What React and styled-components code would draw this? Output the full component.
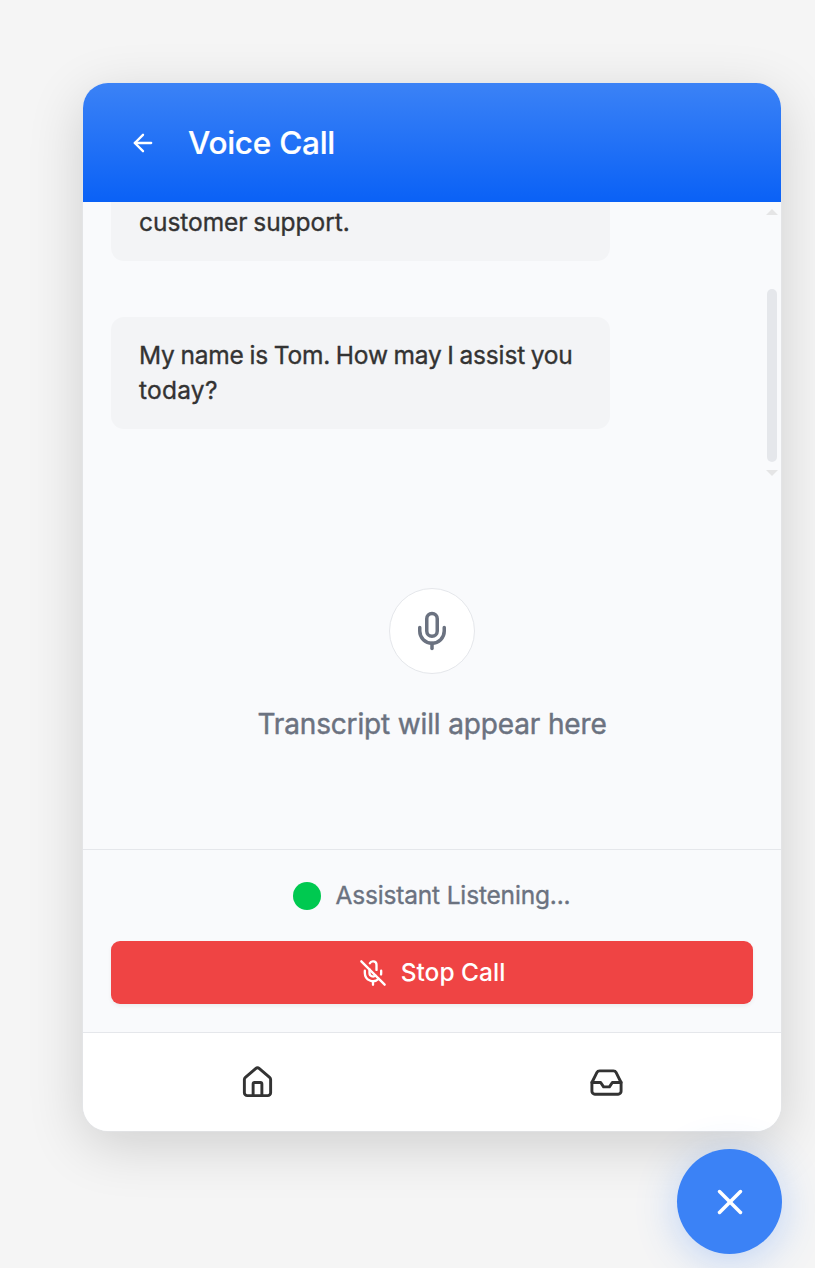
import React from "react";
import styled, { createGlobalStyle } from "styled-components";
import { ArrowLeft, House, Inbox, Mic, MicOff, X } from "lucide-react";

const GlobalStyle = createGlobalStyle`
  * { box-sizing: border-box; }
  body {
    margin: 0;
    background: #f5f5f5;
    font-family: Inter, "Liberation Sans", sans-serif;
    color: #333;
  }
  button { font: inherit; border: 0; padding: 0; background: none; color: inherit; }
  svg { display: block; flex: none; }
`;

const Page = styled.main`
  height: 1268px;
  padding: 83px 33px 0 83px;
  display: flex;
  flex-direction: column;
  gap: 18px;
  overflow: hidden;
`;

const Card = styled.section`
  width: 698px;
  height: 1048px;
  flex: none;
  display: flex;
  flex-direction: column;
  border-radius: 25px;
  overflow: hidden;
  background: #f9fafc;
  box-shadow: 0 0 0 1px rgba(229, 231, 235, 0.5), 0 14px 56px rgba(0, 0, 0, 0.16);
`;

const Header = styled.header`
  height: 119px;
  flex: none;
  display: flex;
  align-items: center;
  gap: 31px;
  padding: 1px 46px 0;
  color: #fff;
  background: linear-gradient(180deg, #3b82f6, #0a61f6);
`;

const Title = styled.h1`
  margin: 0;
  font-size: 31.5px;
  line-height: 42px;
  font-weight: 500;
  letter-spacing: -0.25px;
  -webkit-text-stroke: 0.2px currentColor;
`;

const Transcript = styled.div`
  height: 282px;
  flex: none;
  display: flex;
  justify-content: space-between;
  overflow: hidden;
`;

const Messages = styled.div`
  height: 100%;
  padding: 0 0 55px 28px;
  display: flex;
  flex-direction: column;
  justify-content: flex-end;
  gap: 56px;
`;

const Bubble = styled.p`
  margin: 0;
  width: 499px;
  flex: none;
  padding: 21px 20px 21px 28px;
  border-radius: 13px;
  background: #f3f4f6;
  font-size: 24.5px;
  line-height: 35px;
  white-space: nowrap;
  -webkit-text-stroke: 0.35px currentColor;
`;

const Line = styled.span`
  display: block;
  letter-spacing: ${(p) => p.$tracking};
  word-spacing: -1px;
`;

const Scrollbar = styled.div`
  width: 18px;
  padding-top: 7px;
  display: flex;
  flex-direction: column;
  align-items: center;
`;

const Arrow = styled.span`
  border: 6px solid transparent;
  border-top: ${(p) => (p.$down ? "6px solid #e5e5e6" : "0")};
  border-bottom: ${(p) => (p.$down ? "0" : "6px solid #e5e5e6")};
`;

const Thumb = styled.span`
  width: 10px;
  height: 173px;
  margin: 74px 0 8px;
  border-radius: 5px;
  background: #e5e7eb;
`;

const Placeholder = styled.div`
  flex: 1;
  display: flex;
  flex-direction: column;
  align-items: center;
  padding-top: 104px;
  gap: 29px;
  color: #6b7280;
`;

const MicCircle = styled.div`
  width: 86px;
  height: 86px;
  display: grid;
  place-items: center;
  border: 1px solid #e5e7eb;
  border-radius: 50%;
  background: #fff;
`;

const Hint = styled.p`
  margin: 0;
  font-size: 28px;
  line-height: 42px;
  letter-spacing: -0.15px;
  -webkit-text-stroke: 0.45px currentColor;
`;

const Controls = styled.div`
  height: 183px;
  flex: none;
  padding: 28px;
  border-top: 1px solid #e5e7eb;
  display: flex;
  flex-direction: column;
  gap: 28px;
`;

const Status = styled.div`
  height: 35px;
  display: flex;
  align-items: center;
  justify-content: center;
  gap: 14px;
  color: #6b7280;
  font-size: 24.5px;
  letter-spacing: -0.17px;
  -webkit-text-stroke: 0.35px currentColor;
`;

const Label = styled.span`
  padding-bottom: 2px;
`;

const Dot = styled.span`
  width: 28px;
  height: 28px;
  border-radius: 50%;
  background: #00c950;
`;

const StopButton = styled.button`
  height: 63px;
  display: flex;
  align-items: center;
  justify-content: center;
  gap: 14px;
  border-radius: 9px;
  background: #ef4444;
  color: #fff;
  font-size: 24.5px;
  font-weight: 500;
  box-shadow: 0 2px 4px rgba(0, 0, 0, 0.06);
`;

const Nav = styled.nav`
  height: 99px;
  flex: none;
  display: grid;
  grid-template-columns: 1fr 1fr;
  border-top: 1px solid #e5e7eb;
  background: #fff;
`;

const NavItem = styled.button`
  display: grid;
  place-items: center;
`;

const CloseButton = styled.button`
  width: 105px;
  height: 105px;
  flex: none;
  align-self: flex-end;
  display: grid;
  place-items: center;
  position: relative;
  border-radius: 50%;
  background: #3b82f6;
  color: #fff;
  box-shadow: 0 7px 42px rgba(59, 130, 246, 0.3);
`;

export default function App() {
  return (
    <>
      <GlobalStyle />
      <Page>
        <Card>
          <Header>
            <ArrowLeft size={28} />
            <Title>Voice Call</Title>
          </Header>
          <Transcript>
            <Messages>
              <Bubble>
                <Line $tracking="-0.05px">customer support.</Line>
              </Bubble>
              <Bubble>
                <Line $tracking="-0.17px">My name is Tom. How may I assist you</Line>
                <Line $tracking="0.25px">today?</Line>
              </Bubble>
            </Messages>
            <Scrollbar>
              <Arrow />
              <Thumb />
              <Arrow $down />
            </Scrollbar>
          </Transcript>
          <Placeholder>
            <MicCircle>
              <Mic size={42} />
            </MicCircle>
            <Hint>Transcript will appear here</Hint>
          </Placeholder>
          <Controls>
            <Status>
              <Dot />
              <Label>Assistant Listening...</Label>
            </Status>
            <StopButton>
              <MicOff size={28} />
              <Label>Stop Call</Label>
            </StopButton>
          </Controls>
          <Nav>
            <NavItem aria-label="Home">
              <House size={35} />
            </NavItem>
            <NavItem aria-label="Inbox">
              <Inbox size={35} />
            </NavItem>
          </Nav>
        </Card>
        <CloseButton aria-label="Close">
          <X size={42} />
        </CloseButton>
      </Page>
    </>
  );
}
